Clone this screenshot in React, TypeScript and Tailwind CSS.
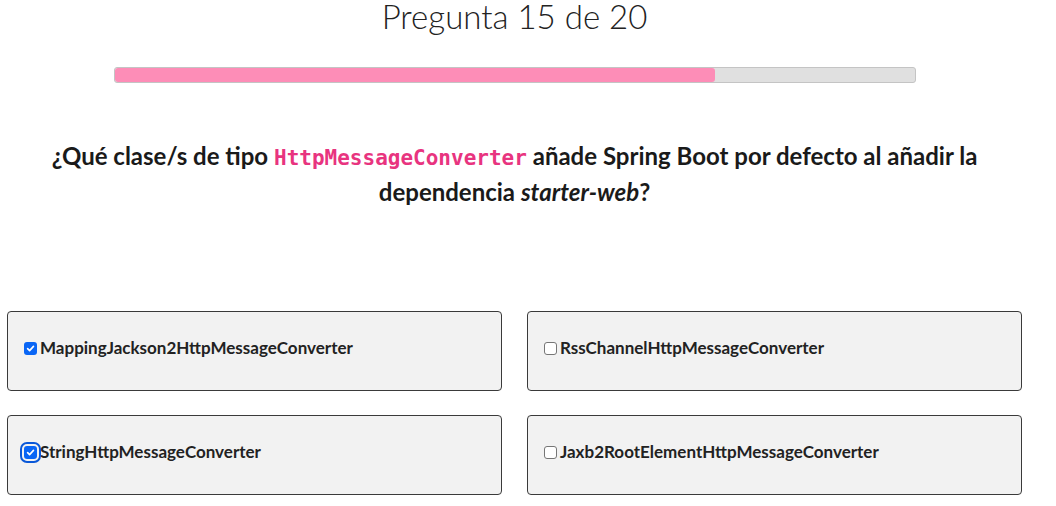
import React, { useState } from 'react';

const options = [
  'MappingJackson2HttpMessageConverter',
  'RssChannelHttpMessageConverter',
  'StringHttpMessageConverter',
  'Jaxb2RootElementHttpMessageConverter',
];

function Check({ checked, focused }: { checked: boolean; focused?: boolean }) {
  return (
    <span
      className={
        'relative inline-flex items-center justify-center w-[13px] h-[13px] rounded-[3px] shrink-0 ' +
        (checked ? 'bg-[#0a66f5]' : 'bg-white border border-[#767676]') +
        (focused ? ' outline-2 outline-[#0a58d8] outline-offset-[2px]' : '')
      }
    >
      {checked && (
        <svg width="9" height="9" viewBox="0 0 10 10">
          <path d="M1.8 5.2 L4 7.4 L8.3 2.6" fill="none" stroke="white" strokeWidth="1.8" strokeLinecap="round" strokeLinejoin="round" />
        </svg>
      )}
    </span>
  );
}

export default function App() {
  const [selected, setSelected] = useState<string[]>([options[0], options[2]]);

  const toggle = (o: string) =>
    setSelected((s) => (s.includes(o) ? s.filter((x) => x !== o) : [...s, o]));

  return (
    <div className="w-[1056px] h-[506px] bg-white overflow-hidden font-['Lato','Noto_Sans',sans-serif]">
      <div className="w-[1029px] flex flex-col items-center">
        <h1 className="text-[33px] font-light leading-[32px] text-[#222]">Pregunta 15 de 20</h1>
        <div className="mt-[35px] w-[802px] h-[16px] rounded-[3px] border border-[#c4c4c4] bg-[#e0e0e0] overflow-hidden">
          <div className="h-full w-[75%] bg-[#fd8db7] rounded-[3px]" />
        </div>
        <p className="mt-[56px] w-[1000px] text-center text-[24px] font-bold leading-[34px] text-[#1a1a1a]">
          ¿Qué clase/s de tipo{' '}
          <code className="font-['DejaVu_Sans_Mono',monospace] text-[21px] font-semibold text-[#e8347f]">HttpMessageConverter</code>{' '}
          añade Spring Boot por defecto al añadir la dependencia <em>starter-web</em>?
        </p>
        <div className="mt-[102px] self-stretch px-[7px] grid grid-cols-2 gap-x-[25px] gap-y-[24px]">
          {options.map((o, i) => {
            const checked = selected.includes(o);
            return (
              <label
                key={o}
                onClick={() => toggle(o)}
                className="h-[80px] flex items-start gap-[3px] pl-[16px] pt-[27px] bg-[#f2f2f2] border border-[#3a3a3a] rounded-[4px] cursor-pointer"
              >
                <span className="h-[17px] mt-[1px] flex items-center">
                  <Check checked={checked} focused={i === 2} />
                </span>
                <span className="text-[17px] font-bold leading-[18px] text-[#222]">{o}</span>
              </label>
            );
          })}
        </div>
      </div>
    </div>
  );
}
